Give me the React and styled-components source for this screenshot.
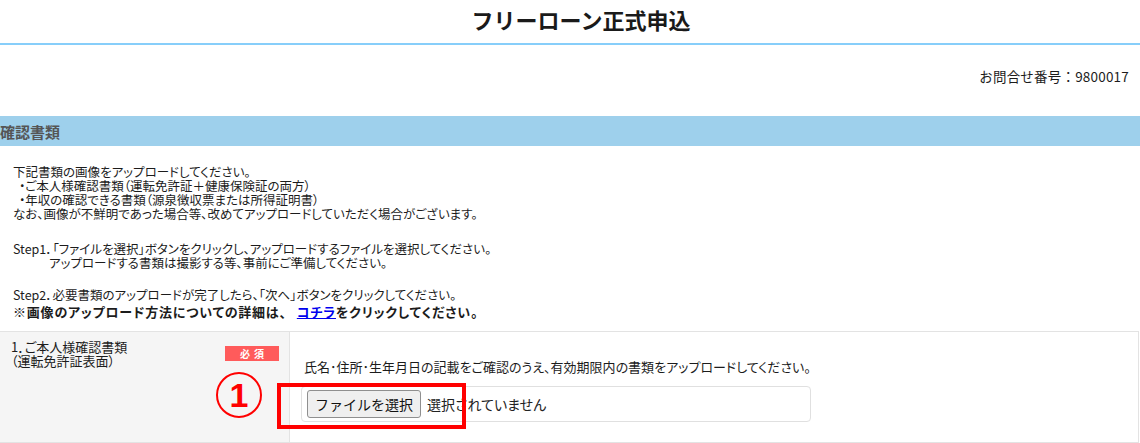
import React from 'react';
import styled, { createGlobalStyle } from 'styled-components';

const GlobalStyle = createGlobalStyle`
  body {
    margin: 0;
    background: #fff;
    color: #1c1c1c;
    font-family: "Noto Sans CJK JP", "Noto Sans", sans-serif;
  }
`;

const Header = styled.header`
  height: 45px;
  display: flex;
  align-items: flex-start;
  justify-content: center;
  padding-left: 22px;
  box-sizing: border-box;
  border-bottom: 2px solid #87cefa;
`;

const Title = styled.h1`
  margin: 3px 0 0;
  font-size: 22px;
  line-height: 32px;
  font-weight: 700;
  color: #1a1a1a;
`;

const InquiryRow = styled.div`
  display: flex;
  justify-content: flex-end;
  padding: 22px 11px 0 0;
  height: 46px;
  box-sizing: border-box;
  font-size: 13.5px;
  line-height: 18px;
  letter-spacing: 0.2px;
`;

const SectionBar = styled.h2`
  margin: 25px 0 0;
  height: 30px;
  display: flex;
  align-items: center;
  background: #9ed0ec;
  color: #555;
  font-size: 15px;
  font-weight: 700;
`;

const Intro = styled.div`
  padding: 19px 13px 0;
  font-size: 12.5px;
  line-height: 14px;
  font-feature-settings: "palt";
`;

const Paragraph = styled.p`
  margin: 0 0 ${(props) => props.gap ?? 20}px;
`;

const Line = styled.span`
  display: block;
  padding-left: ${(props) => props.indent || 0}px;
`;

const Notice = styled.p`
  margin: 0;
  font-size: 13px;
  font-weight: 700;
  line-height: 20px;
  letter-spacing: 0.8px;
`;

const Link = styled.a`
  color: #0000ee;
  text-decoration: underline;
  margin-left: 10px;
`;

const Table = styled.div`
  position: relative;
  display: grid;
  grid-template-columns: 290px 1fr;
  width: 1138px;
  margin-top: 9px;
  border: 1px solid #e3e3e3;
  border-left: none;
  font-size: 13px;
  font-feature-settings: "palt";
`;

const LabelCell = styled.div`
  display: flex;
  justify-content: space-between;
  align-items: flex-start;
  height: 110px;
  padding: 8px 10px 0 11px;
  box-sizing: border-box;
  background: #f5f5f5;
  border-right: 1px solid #e3e3e3;
  line-height: 14px;
`;

const Badge = styled.span`
  margin-top: 6px;
  width: 54px;
  height: 15px;
  display: flex;
  align-items: center;
  justify-content: center;
  background: #ff5b5b;
  color: #fff;
  font-size: 10px;
  font-weight: 700;
  letter-spacing: 4px;
  text-indent: 4px;
`;

const InputCell = styled.div`
  padding: 26px 0 0 14px;
  line-height: 18px;
`;

const FileBox = styled.div`
  margin: 10px 0 0 -3px;
  width: 510px;
  height: 36px;
  box-sizing: border-box;
  display: flex;
  align-items: center;
  gap: 6px;
  padding-left: 5px;
  border: 1px solid #e0e0e0;
  border-radius: 4px;
  background: #fff;
`;

const FileButton = styled.button`
  height: 28px;
  padding: 0 7px;
  border: 1px solid #8f8f8f;
  border-radius: 3px;
  background: #efefef;
  color: #111;
  font-family: inherit;
  font-size: 14px;
  cursor: pointer;
`;

const FileStatus = styled.span`
  font-size: 14px;
  color: #222;
`;

const StepCircle = styled.div`
  position: absolute;
  left: 216px;
  top: 40px;
  width: 46px;
  height: 46px;
  box-sizing: border-box;
  display: flex;
  align-items: center;
  justify-content: center;
  border: 2px solid #ff0000;
  border-radius: 50%;
  color: #ff0000;
  font-family: "Liberation Sans", Arial, sans-serif;
  font-size: 34px;
  font-weight: 700;
  line-height: 1;
`;

const Highlight = styled.div`
  position: absolute;
  left: 277px;
  top: 51px;
  width: 189px;
  height: 46px;
  box-sizing: border-box;
  border: 4px solid #ff0000;
  pointer-events: none;
`;

const App = () => {
  return (
    <>
      <GlobalStyle />
      <Header>
        <Title>フリーローン正式申込</Title>
      </Header>
      <InquiryRow>お問合せ番号：9800017</InquiryRow>
      <SectionBar>確認書類</SectionBar>
      <Intro>
        <Paragraph gap={21}>
          <Line>下記書類の画像をアップロードしてください。</Line>
          <Line indent={6}>・ご本人様確認書類（運転免許証＋健康保険証の両方）</Line>
          <Line indent={6}>・年収の確認できる書類（源泉徴収票または所得証明書）</Line>
          <Line>なお、画像が不鮮明であった場合等、改めてアップロードしていただく場合がございます。</Line>
        </Paragraph>
        <Paragraph gap={18}>
          <Line>Step1．「ファイルを選択」ボタンをクリックし、アップロードするファイルを選択してください。</Line>
          <Line indent={36}>アップロードする書類は撮影する等、事前にご準備してください。</Line>
        </Paragraph>
        <Paragraph gap={0}>
          <Line>Step2．必要書類のアップロードが完了したら、「次へ」ボタンをクリックしてください。</Line>
        </Paragraph>
        <Notice>
          ※画像のアップロード方法についての詳細は、<Link href="#">コチラ</Link>をクリックしてください。
        </Notice>
      </Intro>
      <Table>
        <LabelCell>
          <span>
            1．ご本人様確認書類
            <br />
            （運転免許証表面）
          </span>
          <Badge>必須</Badge>
        </LabelCell>
        <InputCell>
          氏名･住所･生年月日の記載をご確認のうえ、有効期限内の書類をアップロードしてください。
          <FileBox>
            <FileButton type="button">ファイルを選択</FileButton>
            <FileStatus>選択されていません</FileStatus>
          </FileBox>
        </InputCell>
        <StepCircle>1</StepCircle>
        <Highlight />
      </Table>
    </>
  );
};

export default App;
